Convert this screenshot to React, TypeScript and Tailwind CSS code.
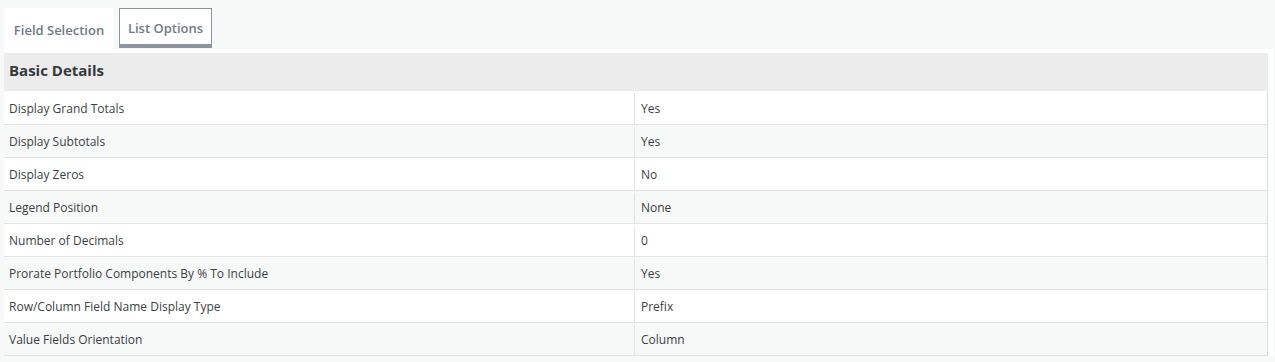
const rows: [string, string][] = [
  ["Display Grand Totals", "Yes"],
  ["Display Subtotals", "Yes"],
  ["Display Zeros", "No"],
  ["Legend Position", "None"],
  ["Number of Decimals", "0"],
  ["Prorate Portfolio Components By % To Include", "Yes"],
  ["Row/Column Field Name Display Type", "Prefix"],
  ["Value Fields Orientation", "Column"],
];

export default function App() {
  return (
    <div className="h-[362px] w-[1275px] overflow-hidden bg-[#f7f8f8] font-['Open_Sans',sans-serif] text-[#3a3f44]">
      <div className="flex items-start gap-[5px] pl-[4px] pt-[8px]">
        <button className="h-[41px] w-[110px] bg-white pt-[5px] text-[13px] font-semibold text-[#6f7a86]">
          Field Selection
        </button>
        <button className="h-[40px] w-[93px] border border-b-[4px] border-[#8a959f] bg-white pt-[5px] text-[13px] font-semibold text-[#6f7a86]">
          List Options
        </button>
      </div>
      <div className="ml-[4px] mr-[2px] bg-white pr-[5px] pt-[4px]">
        <div className="flex h-[38px] items-center bg-[#ececec] px-[5px] pb-[3px] text-[15px] font-bold text-[#34393e]">
          Basic Details
        </div>
        <div className="border-r border-[#dcdcdc]">
          {rows.map(([label, value], i) => (
            <div
              key={label}
              className={`flex border-b border-[#e2e2e2] pt-[2px] text-[12px] ${
                i === 0 ? "h-[34px]" : "h-[33px]"
              } ${i % 2 === 1 ? "bg-[#f7f8f8]" : "bg-white"}`}
            >
              <div className="flex w-[631px] items-center border-r border-[#e2e2e2] pl-[5px]">
                {label}
              </div>
              <div className="flex flex-1 items-center pl-[6px]">{value}</div>
            </div>
          ))}
        </div>
      </div>
    </div>
  );
}
